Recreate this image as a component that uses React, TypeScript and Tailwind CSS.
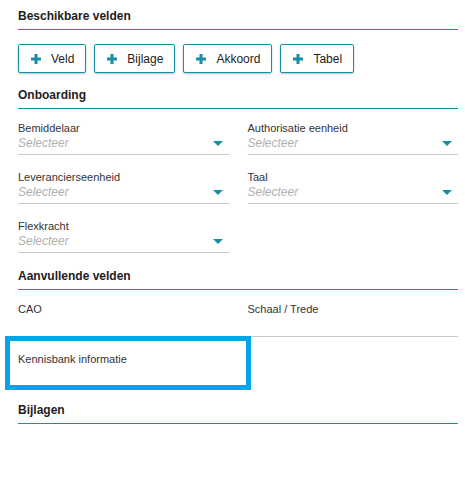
import { ReactNode } from "react";

const SectionHeader = ({ children, className }: { children: ReactNode; className?: string }) => (
  <div className={`border-b border-[#168ea3] pb-[5px] ${className ?? ""}`}>
    <h2 className="text-[12px] leading-[16px] font-bold text-[#1d1d1d]">{children}</h2>
  </div>
);

const PlusIcon = () => (
  <svg width="10" height="10" viewBox="0 0 10 10" className="shrink-0">
    <rect x="3.5" y="0" width="3" height="10" fill="#168ea3" />
    <rect x="0" y="3.5" width="10" height="3" fill="#168ea3" />
  </svg>
);

const AddButton = ({ label }: { label: string }) => (
  <button
    type="button"
    className="h-[29px] flex items-center gap-[10px] pl-[12px] pr-[11px] border border-[#168ea3] rounded-[2px] bg-white shadow-[0_1px_2px_rgba(0,0,0,0.25)] text-[12px] text-[#222]"
  >
    <PlusIcon />
    <span>{label}</span>
  </button>
);

const SelectField = ({ label }: { label: string }) => (
  <div>
    <div className="text-[11px] leading-[13px] text-[#333]">{label}</div>
    <div className="flex items-center justify-between border-b border-[#c8c8c8] pb-[3px]">
      <span className="text-[12px] leading-[16px] italic text-[#b0b0b0]">Selecteer</span>
      <svg width="10" height="6" viewBox="0 0 10 6" className="mr-[6px] mt-[2px]">
        <polygon points="0,0 10,0 5,5" fill="#168ea3" />
      </svg>
    </div>
  </div>
);

const TextField = ({ label }: { label: string }) => (
  <div className="border-b border-[#c8c8c8]">
    <div className="text-[11px] leading-[13px] text-[#333]">{label}</div>
    <div className="h-[20px]" />
  </div>
);

export default function App() {
  return (
    <div className="relative w-[465px] h-[488px] bg-white pl-[18px] pr-[7px] font-['Liberation_Sans',Arial,sans-serif] overflow-hidden">
      <SectionHeader className="pt-[8px]">Beschikbare velden</SectionHeader>

      <div className="mt-[14px] flex gap-[8px]">
        <AddButton label="Veld" />
        <AddButton label="Bijlage" />
        <AddButton label="Akkoord" />
        <AddButton label="Tabel" />
      </div>

      <SectionHeader className="mt-[14px]">Onboarding</SectionHeader>

      <div className="mt-[13px] grid grid-cols-2 gap-x-[19px] gap-y-[16px]">
        <SelectField label="Bemiddelaar" />
        <SelectField label="Authorisatie eenheid" />
        <SelectField label="Leverancierseenheid" />
        <SelectField label="Taal" />
        <SelectField label="Flexkracht" />
      </div>

      <SectionHeader className="mt-[15px]">Aanvullende velden</SectionHeader>

      <div className="mt-[13px] grid grid-cols-2 gap-x-[19px] gap-y-[16px]">
        <TextField label="CAO" />
        <TextField label="Schaal / Trede" />
        <TextField label="Kennisbank informatie" />
      </div>

      <SectionHeader className="mt-[15px]">Bijlagen</SectionHeader>

      <div className="absolute left-[5px] top-[336px] w-[246px] h-[54px] border-[5px] border-[#02a6e6]" />
    </div>
  );
}
